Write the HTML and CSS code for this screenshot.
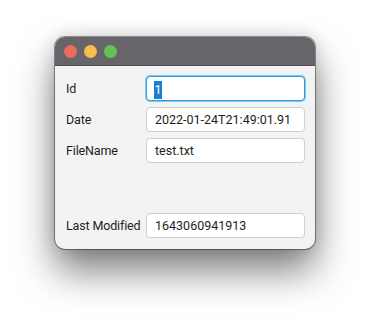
FILE: index.html
```html
<!DOCTYPE html>
<html>
<head>
<meta charset="utf-8">
<link rel="stylesheet" href="styles.css">
</head>
<body>
<div class="window">
  <div class="titlebar">
    <span class="light red"></span>
    <span class="light yellow"></span>
    <span class="light green"></span>
  </div>
  <div class="content">
    <div class="row">
      <span class="label">Id</span>
      <div class="field focused"><span class="sel">1</span></div>
    </div>
    <div class="row">
      <span class="label">Date</span>
      <div class="field">2022-01-24T21:49:01.91</div>
    </div>
    <div class="row">
      <span class="label">FileName</span>
      <div class="field">test.txt</div>
    </div>
    <div class="row last">
      <span class="label">Last Modified</span>
      <div class="field">1643060941913</div>
    </div>
  </div>
</div>
</body>
</html>
```

FILE: styles.css
```css
html, body {
  margin: 0;
  padding: 0;
  background: #ffffff;
  height: 100%;
}
body {
  box-sizing: border-box;
  padding: 37px 0 0 55px;
  font-family: Roboto, "Noto Sans", sans-serif;
}
.window {
  width: 260px;
  height: 212px;
  border-radius: 10px;
  overflow: hidden;
  background: #f3f3f3;
  box-shadow: 0 0 0 1px rgba(0,0,0,0.38), 0 22px 38px rgba(0,0,0,0.5), 0 0 18px rgba(0,0,0,0.15);
  display: flex;
  flex-direction: column;
}
.titlebar {
  height: 28px;
  background: #676569;
  border-bottom: 1px solid #4e4c50;
  display: flex;
  align-items: center;
  gap: 7px;
  padding-left: 9px;
}
.light {
  width: 13px;
  height: 13px;
  border-radius: 50%;
}
.red { background: #ec6a5e; }
.yellow { background: #f4bf4f; }
.green { background: #61c554; }
.content {
  padding: 10px 10px 0 11px;
  display: flex;
  flex-direction: column;
  gap: 6px;
}
.row {
  display: flex;
  align-items: center;
}
.row.last {
  margin-top: 44px;
}
.label {
  width: 80px;
  font-size: 12.5px;
  letter-spacing: -0.15px;
  color: #1e1e1e;
  white-space: nowrap;
}
.field {
  flex: 1;
  box-sizing: border-box;
  height: 25px;
  background: #ffffff;
  border: 1px solid #cfcfcf;
  border-radius: 4px;
  padding-left: 8px;
  font-size: 12.5px;
  line-height: 23px;
  color: #1e1e1e;
  white-space: nowrap;
  overflow: hidden;
}
.field.focused {
  border: 1px solid #2f9ae6;
  box-shadow: 0 0 0 1px #86c6f2;
  padding-left: 7px;
}
.sel {
  background: #1c7fcf;
  color: #ffffff;
  display: inline-block;
  line-height: 18px;
  vertical-align: middle;
  padding: 0 0.5px;
}
```
